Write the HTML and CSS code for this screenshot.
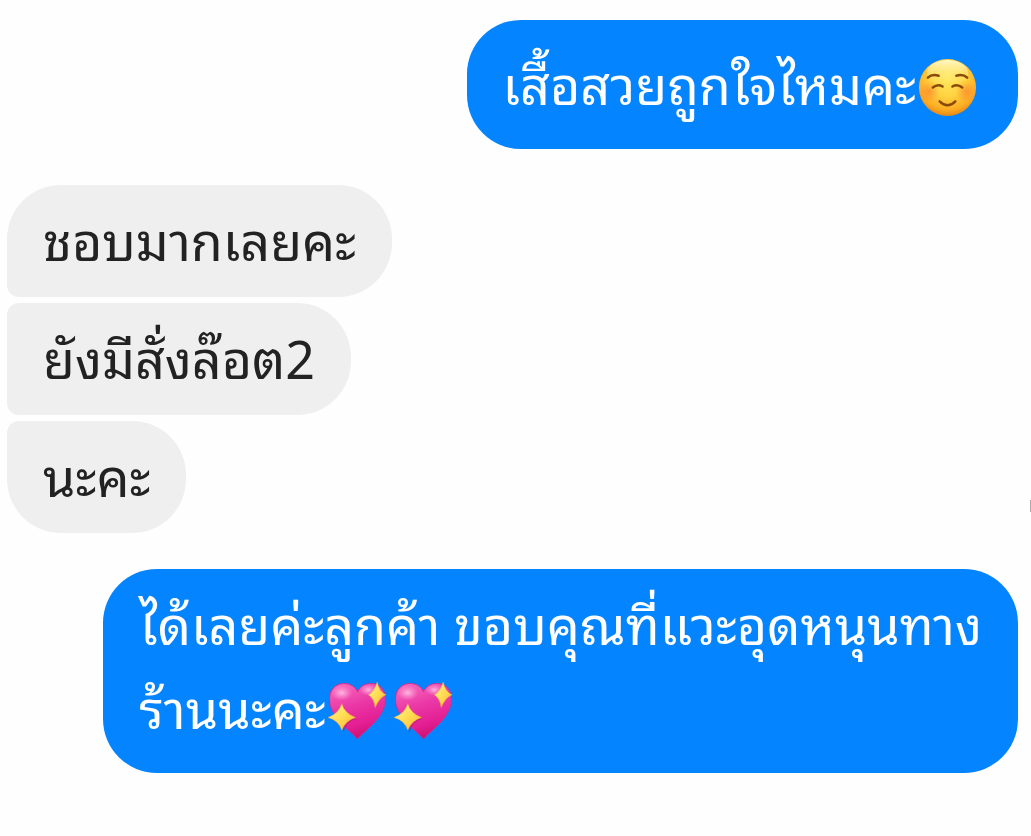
FILE: index.html
```html
<!DOCTYPE html>
<html lang="th">
<head>
  <meta charset="UTF-8" />
  <meta name="viewport" content="width=device-width, initial-scale=1.0" />
  <title>Chat</title>
  <link rel="stylesheet" href="styles.css">
</head>
<body>
  <!-- Shared emoji artwork -->
  <svg class="defs" aria-hidden="true">
    <defs>
      <radialGradient id="faceFill" cx="50%" cy="35%" r="68%">
        <stop offset="0" stop-color="#ffe65c" />
        <stop offset="0.45" stop-color="#ffd341" />
        <stop offset="0.8" stop-color="#fcab22" />
        <stop offset="1" stop-color="#e07c10" />
      </radialGradient>
      <radialGradient id="blush">
        <stop offset="0" stop-color="#fb6a2c" stop-opacity="0.5" />
        <stop offset="1" stop-color="#fb6a2c" stop-opacity="0" />
      </radialGradient>
      <linearGradient id="faceShine" x1="0" y1="0" x2="0" y2="1">
        <stop offset="0" stop-color="#fffbd6" stop-opacity="0.9" />
        <stop offset="1" stop-color="#fff27a" stop-opacity="0" />
      </linearGradient>
      <linearGradient id="heartFill" x1="0.3" y1="0" x2="0.6" y2="1">
        <stop offset="0" stop-color="#f665ba" />
        <stop offset="0.4" stop-color="#ea37a6" />
        <stop offset="0.75" stop-color="#e31d92" />
        <stop offset="1" stop-color="#c80f68" />
      </linearGradient>
      <radialGradient id="heartShine">
        <stop offset="0" stop-color="#ffc4e6" stop-opacity="0.9" />
        <stop offset="1" stop-color="#ff9ad6" stop-opacity="0" />
      </radialGradient>
      <linearGradient id="sparkFill" x1="0" y1="0" x2="1" y2="1">
        <stop offset="0" stop-color="#fff3a0" />
        <stop offset="0.5" stop-color="#ffdc52" />
        <stop offset="1" stop-color="#fbb136" />
      </linearGradient>
      <symbol id="sparkHeart" viewBox="0 0 60 60">
        <path fill="url(#heartFill)" stroke="#c92f93" d="M30 58C25 51 2 37 1.500 18C1 8 8 1.500 16 1.500C23 1.500 28 5 30 10C32 5 37 1.500 44 1.500C52 1.500 59 8 58.500 18C58 37 35 51 30 58Z" />
        <ellipse cx="14" cy="11" rx="11" ry="8" fill="url(#heartShine)" />
        <ellipse cx="41" cy="8" rx="9" ry="6" fill="url(#heartShine)" />
        <path fill="#a3125f" opacity="0.4" d="M16 25Q18 36 29 38Q18 40 16 52Q13 40 4 38Q14 36 16 25Z" />
        <path fill="url(#sparkFill)" stroke="#ee9f3d" stroke-width="0.500" d="M14 22Q17 32 28 36Q18 39 14 49Q11 39 0 36Q11 32 14 22Z" />
        <path fill="url(#sparkFill)" stroke="#ee9f3d" stroke-width="0.500" d="M50 0Q52 10 59 13Q52 16 48 26Q47 17 41 13Q47 10 50 0Z" />
      </symbol>
    </defs>
  </svg>

  <main class="chat">
    <div class="group sent">
      <p class="bubble tall">เสื้อสวยถูกใจไหมคะ<svg class="emoji" viewBox="0 0 60 60" role="img" aria-label="☺️">
        <circle cx="30" cy="30" r="29" fill="url(#faceFill)" />
        <ellipse cx="30" cy="15" rx="21" ry="13" fill="url(#faceShine)" />
        <circle cx="11" cy="34" r="11" fill="url(#blush)" />
        <circle cx="49" cy="34" r="11" fill="url(#blush)" />
        <g fill="none" stroke="#8a4b0a" stroke-width="2.500" stroke-linecap="round">
          <path d="M10 20Q14 16 21 18" />
          <path d="M39 18Q46 16 50 20" />
          <path d="M15 30Q20 26 25 29" />
          <path d="M35 29Q40 26 45 30" />
          <path d="M22 44Q30 52 38 44" />
        </g>
      </svg></p>
    </div>

    <div class="group received">
      <p class="bubble first">ชอบมากเลยคะ</p>
      <p class="bubble middle">ยังมีสั่งล๊อต2</p>
      <p class="bubble last">นะคะ</p>
    </div>

    <div class="group sent">
      <p class="bubble">ได้เลยค่ะลูกค้า ขอบคุณที่แวะอุดหนุนทาง<br>ร้านนะคะ<svg class="emoji" role="img" aria-label="💖"><use href="#sparkHeart" /></svg><svg class="emoji" role="img" aria-label="💖"><use href="#sparkHeart" /></svg></p>
    </div>
  </main>

  <div class="scroll-mark"></div>
</body>
</html>
```

FILE: styles.css
```css
body {
  margin: 0;
  background-color: #fefefe;
  color: #222;
  font-family: "Noto Sans Thai Looped", Loma, "Noto Sans", sans-serif;
  font-size: 52px;
  line-height: 84px;
}

.defs {
  position: absolute;
  width: 0;
  height: 0;
}

.chat {
  display: flex;
  flex-direction: column;
  gap: 36px;
  padding: 20px 13px 20px 7px;
}

.group {
  display: flex;
  flex-direction: column;
  gap: 6px;
}

.sent {
  align-items: flex-end;
}

.received {
  align-items: flex-start;
}

.bubble {
  margin: 0;
  border-radius: 54px;
}

.sent .bubble {
  padding: 11px 36px 25px;
  background-color: #0584ff;
  color: #fff;
}

.sent .tall {
  padding: 20px 36px 25px;
}

.received .bubble {
  padding: 11px 36px 17px;
  background-color: #efefef;
}

.received .first {
  border-bottom-left-radius: 12px;
}

.received .middle {
  border-top-left-radius: 12px;
  border-bottom-left-radius: 12px;
}

.received .last {
  border-top-left-radius: 12px;
}

/* Emoji sit on the text line */
.emoji {
  width: 59px;
  height: 59px;
  margin: 0 5px 0 2px;
  vertical-align: -12px;
}

/* Edge of the scrollbar */
.scroll-mark {
  position: absolute;
  top: 500px;
  right: 0;
  width: 1px;
  height: 12px;
  background-color: #aaa;
}
```
